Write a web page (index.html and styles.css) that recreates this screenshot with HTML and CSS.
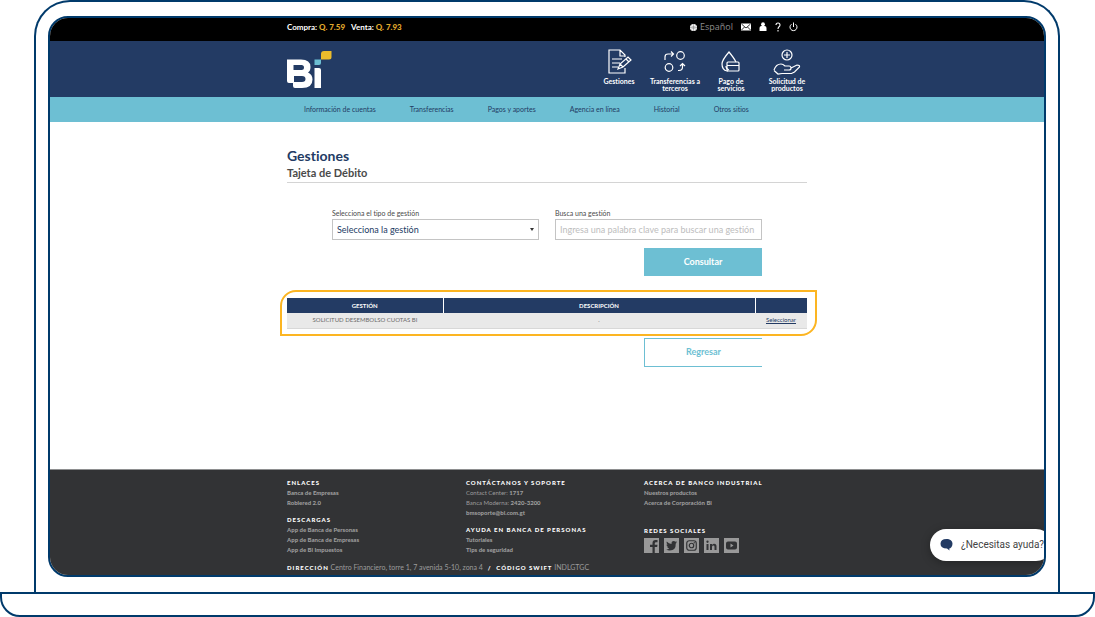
FILE: index.html
```html
<!DOCTYPE html>
<html lang="es">
<head>
<meta charset="utf-8">
<title>Gestiones - Banca en línea</title>
<link rel="stylesheet" href="styles.css">
</head>
<body>
<div class="laptop">
  <div class="lid">
    <div class="screen">
      <div class="topbar">
        <div class="container topbar-row">
          <p class="rates"><span>Compra: <b>Q. 7.59</b></span><span>Venta: <b>Q. 7.93</b></span></p>
          <div class="tools">
            <button class="tool lang" type="button">
              <svg width="7" height="7" viewBox="0 0 14 14"><circle cx="7" cy="7" r="7" fill="#fff"/><path d="M0 7h14M7 0v14M2 3.500c3 2 7 2 10 0M2 10.500c3-2 7-2 10 0" stroke="#777" fill="none"/></svg>
              Español</button>
            <button class="tool" type="button" aria-label="Mensajes"><svg width="10" height="8" viewBox="0 0 20 16"><path d="M0 1h20v14H0z" fill="#fff"/><path d="M1 2l9 8 9-8M1 14l6-6M19 14l-6-6" stroke="#000" stroke-width="1.600" fill="none"/></svg></button>
            <button class="tool" type="button" aria-label="Perfil"><svg width="8" height="10" viewBox="0 0 16 20"><circle cx="8" cy="4.500" r="3.800" fill="#fff"/><path d="M1 18v-6q0-4 4-4h6q4 0 4 4v6z" fill="#fff"/></svg></button>
            <button class="tool" type="button" aria-label="Ayuda"><svg width="6" height="10" viewBox="0 0 12 20"><path d="M2 6q0-4 4-4t4 4q0 2-2 3.500T6 14M6 16v3" stroke="#fff" stroke-width="2.200" fill="none"/></svg></button>
            <button class="tool" type="button" aria-label="Salir"><svg width="9" height="10" viewBox="0 0 18 20"><path d="M5 4.500a7 7 0 1 0 8 0M9 1v9" stroke="#fff" stroke-width="2" fill="none"/></svg></button>
          </div>
        </div>
      </div>

      <header class="header">
        <div class="container header-row">
          <a class="logo" href="#" aria-label="Bi">
            <svg width="45" height="37" viewBox="0 0 45 37">
              <path fill="#fff" fill-rule="evenodd" d="M0 8.500h14q9.500 0 9.500 7.500 0 4-2.500 5.500 4.500 2 4.500 7 0 8.500-10.500 8.500H8q-2 0-2-2v-3H2q-2 0-2-2zM6.500 14v5h8q2.500 0 2.500-2.500T14.500 14zM7 25v6h8q3.500 0 3.500-3T15 25z"/>
              <path fill="#fff" d="M27.500 17H32q2 0 2 2v18h-6.500z"/>
              <path fill="#6dbfd3" d="M27.500 8.500H34V12q0 2-2 2h-4.500z"/>
              <path fill="#ecbc2c" d="M37 0h7.500v6q0 2.500-2.500 2.500h-8V3q0-3 3-3z"/>
            </svg>
          </a>
          <nav class="shortcuts">
            <a href="#"><svg width="26" height="28" viewBox="0 0 26 28"><path d="M19 9V7l-5-5H3v23h16v-5M14 2v6h5M6 11h10M6 15h8M6 19h6M12 21l2-5 8-7 3 3-8 7zM20 11l3 3M14 16l3 3"/></svg><span>Gestiones</span></a>
            <a href="#"><svg width="26" height="28" viewBox="0 0 26 28"><circle cx="18.500" cy="7.500" r="3.800"/><circle cx="7" cy="19.500" r="3.800"/><path d="M3 12V9q0-3 3-3h5M9 3.500L11.500 6 9 8.500M16 22.500h1q3.500 0 3.500-3.500v-3M18 18l2.500-2.500L23 18"/></svg><span>Transferencias a terceros</span></a>
            <a href="#"><svg width="26" height="28" viewBox="0 0 26 28"><path d="M10 23H9q-5-1-5-7 0-4 7-12 5 6 7 10M8 18q0 3 3 4"/><path d="M10 14h10q1 0 1 1v7q0 1-1 1H10q-1 0-1-1v-7q0-1 1-1zM9 17.500h12"/></svg><span>Pago de servicios</span></a>
            <a href="#"><svg width="28" height="28" viewBox="0 0 28 28"><circle cx="14" cy="7" r="5"/><path d="M14 4v6M11 7h6M1 22q2-6 7-6 2 0 4 2h4q2 0 2 2t-2 2h-5M18 20l6-3q3 0 2.500 2l-5 5-3 1.500H9L5 26l-4-3.500"/></svg><span>Solicitud de productos</span></a>
          </nav>
        </div>
      </header>

      <nav class="menu">
        <div class="container menu-row">
          <a href="#">Información de cuentas</a>
          <a href="#">Transferencias</a>
          <a href="#">Pagos y aportes</a>
          <a href="#">Agencia en línea</a>
          <a href="#">Historial</a>
          <a href="#">Otros sitios</a>
        </div>
      </nav>

      <main class="main">
        <div class="container">
          <div class="title">
            <h1>Gestiones</h1>
            <h2>Tajeta de Débito</h2>
          </div>
          <form class="search">
            <div class="field">
              <label for="tipo">Selecciona el tipo de gestión</label>
              <div class="select-box">
                <select id="tipo"><option>Selecciona la gestión</option></select>
              </div>
            </div>
            <div class="field">
              <label for="busca">Busca una gestión</label>
              <input id="busca" type="text" placeholder="Ingresa una palabra clave para buscar una gestión">
            </div>
            <button class="btn btn-primary" type="submit">Consultar</button>
          </form>
          <div class="highlight">
            <table class="results">
              <colgroup><col class="col-name"><col class="col-desc"><col class="col-action"></colgroup>
              <thead><tr><th>GESTIÓN</th><th>DESCRIPCIÓN</th><th></th></tr></thead>
              <tbody><tr><td>SOLICITUD DESEMBOLSO CUOTAS BI</td><td>.</td><td><a href="#">Seleccionar</a></td></tr></tbody>
            </table>
          </div>
          <div class="actions"><button class="btn btn-outline" type="button">Regresar</button></div>
        </div>
      </main>

      <footer class="footer">
        <div class="container">
          <div class="footer-cols">
            <div class="footer-col">
              <section><h3>ENLACES</h3><a href="#">Banca de Empresas</a><a href="#">Roblered 2.0</a></section>
              <section><h3>DESCARGAS</h3><a href="#">App de Banca de Personas</a><a href="#">App de Banca de Empresas</a><a href="#">App de Bi Impuestos</a></section>
            </div>
            <div class="footer-col">
              <section><h3>CONTÁCTANOS Y SOPORTE</h3><p>Contact Center: <b>1717</b></p><p>Banca Moderna: <b>2420-3200</b></p><a href="#">bmsoporte@bi.com.gt</a></section>
              <section><h3>AYUDA EN BANCA DE PERSONAS</h3><a href="#">Tutoriales</a><a href="#">Tips de seguridad</a></section>
            </div>
            <div class="footer-col footer-col-wide-gap">
              <section><h3>ACERCA DE BANCO INDUSTRIAL</h3><a href="#">Nuestros productos</a><a href="#">Acerca de Corporación Bi</a></section>
              <section>
                <h3>REDES SOCIALES</h3>
                <div class="social">
                  <a href="#" aria-label="Facebook"><svg viewBox="0 0 30 30"><path d="M17 30V18h-5v-4.500h5V10q0-6 6-6h4v4.500h-3q-2.500 0-2.500 2.500v2.500H27l-.7 4.500h-4.800v12z"/></svg></a>
                  <a href="#" aria-label="Twitter"><svg viewBox="0 0 30 30"><path d="M26 9q-1 1-2.500 2 .5 14-12 14-4 0-7-2 4 0 6-2-3-.5-4-3h2q-3.500-1-3.500-5l2 .6Q4 10 5.500 7q4 4.500 9.500 5-.5-6 4.500-6 2 0 3 1.500l3-1q-.5 1.500-2 2.500z"/></svg></a>
                  <a href="#" aria-label="Instagram"><svg viewBox="0 0 30 30"><rect class="line" x="5.500" y="5.500" width="19" height="19" rx="5"/><circle class="line" cx="15" cy="15" r="4.500"/><circle cx="20.500" cy="9.500" r="1.300"/></svg></a>
                  <a href="#" aria-label="LinkedIn"><svg viewBox="0 0 30 30"><path d="M5 12h4v12H5zM12 12h4v2q1.500-2.500 4.500-2.500Q25 11.500 25 17v7h-4v-6.500q0-2.500-2.300-2.500T16 17.500V24h-4z"/><circle cx="7" cy="7.500" r="2.300"/></svg></a>
                  <a href="#" aria-label="YouTube"><svg viewBox="0 0 30 30"><path fill-rule="evenodd" d="M8 7h14q4 0 4 4v8q0 4-4 4H8q-4 0-4-4v-8q0-4 4-4zM13 11v8l6-4z"/></svg></a>
                </div>
              </section>
            </div>
          </div>
          <p class="address"><strong>DIRECCIÓN</strong> Centro Financiero, torre 1, 7 avenida 5-10, zona 4 <strong class="slash">/</strong> <strong>CÓDIGO SWIFT</strong> INDLGTGC</p>
        </div>
      </footer>

      <button class="chat" type="button">
        <svg width="13" height="12" viewBox="0 0 26 24"><path d="M13 0C20 0 25 4 25 9.500S21 19 18.500 19L19 23l-5-4Q1 19 1 9.500 1 0 13 0z" fill="#233b64"/></svg>
        ¿Necesitas ayuda?
      </button>
    </div>
  </div>
  <div class="base"></div>
</div>
</body>
</html>
```
FILE: styles.css
```css
:root {
  --frame: #003a6b;
  --navy: #233b64;
  --teal: #6dbfd3;
  --dark: #323335;
}

* { box-sizing: border-box; }

body {
  margin: 0;
  background: #fff;
  color: #4a4a4a;
  font: 7px/10px Lato, "Open Sans", sans-serif;
  font-variant-ligatures: none;
}

h1, h2, h3, p { margin: 0; }
a { color: inherit; text-decoration: none; }
button, input, select { font: inherit; font-variant-ligatures: none; }
button { cursor: pointer; }

/* Device frame */
.laptop {
  display: flex;
  flex-direction: column;
  min-height: 100vh;
}

.lid {
  flex: 1;
  display: flex;
  margin: 0 35px 0 34px;
  padding: 14px 12px 15px;
  border: 2px solid var(--frame);
  border-bottom: 0;
  border-radius: 36px 36px 0 0;
}

.base {
  height: 25px;
  border: 2px solid var(--frame);
  border-radius: 0 0 20px 20px;
}

.screen {
  position: relative;
  flex: 1;
  display: flex;
  flex-direction: column;
  overflow: hidden;
  border: 2px solid var(--frame);
  border-radius: 20px;
}

.container {
  width: 100%;
  max-width: 520px;
  margin: 0 auto;
}

/* Top bar */
.topbar { background: #000; color: #fff; }

.topbar-row {
  display: flex;
  justify-content: space-between;
  align-items: center;
  height: 23px;
  padding: 0 9px 5px 0;
}

.rates {
  display: flex;
  gap: 6px;
  font-size: 8px;
  font-weight: 700;
}
.rates b { color: #e0a92c; }

.tools {
  display: flex;
  align-items: center;
  gap: 8px;
}

.tool {
  display: flex;
  align-items: center;
  gap: 3px;
  padding: 0;
  border: 0;
  background: none;
}

.lang {
  color: #8d8d8d;
  font: 9px/12px "Open Sans", sans-serif;
}

/* Header */
.header { background: var(--navy); }

.header-row {
  display: flex;
  justify-content: space-between;
  height: 56px;
}

.logo { padding-top: 10px; }

.shortcuts {
  display: flex;
  margin-right: -8px;
  padding-top: 7px;
}

.shortcuts a {
  display: flex;
  flex-direction: column;
  align-items: center;
  width: 56px;
  padding: 0 2px;
  color: #fff;
  font-weight: 700;
  line-height: 7px;
  text-align: center;
}

.shortcuts span { padding-top: 2px; }

.shortcuts svg {
  fill: none;
  stroke: #fff;
  stroke-width: 1.2;
}

/* Menu */
.menu { background: var(--teal); color: var(--navy); }

.menu-row {
  display: flex;
  gap: 34px;
  padding: 7px 17px 8px;
  white-space: nowrap;
}

/* Content */
.main { flex: 1; padding-top: 25px; }

.title {
  padding-bottom: 1px;
  border-bottom: 1px solid #d4d4d4;
}

.title h1 {
  color: var(--navy);
  font-size: 14px;
  line-height: 18px;
}

.title h2 {
  font-size: 11px;
  line-height: 16px;
}

.search {
  display: grid;
  grid-template-columns: 1fr 1fr;
  gap: 8px 16px;
  padding: 25px 45px 14px;
}

.field label {
  display: block;
  font-size: 7px;
  line-height: 11px;
}

.field input,
.field select {
  display: block;
  width: 100%;
  height: 21px;
  padding: 0 4px;
  border: 1px solid #c4c4c4;
  border-radius: 0;
  background: #fff;
  color: var(--navy);
  font-size: 9px;
  appearance: none;
}

.field input::placeholder { color: #bdbdbd; }

.select-box { position: relative; }

.select-box::after {
  content: "";
  position: absolute;
  top: 9px;
  right: 5px;
  border: 2px solid transparent;
  border-top: 3px solid #333;
  border-bottom: 0;
}

.btn {
  width: 118px;
  height: 28px;
  padding: 0;
  border: 0;
  font-size: 9px;
  font-weight: 700;
}

.btn-primary {
  grid-column: 2;
  justify-self: end;
  background: var(--teal);
  color: #fff;
}

.btn-outline {
  height: 29px;
  border: 1px solid var(--teal);
  border-right: 0;
  background: #fff;
  color: var(--teal);
}

.highlight {
  margin: 0 -10px 0 -7px;
  padding: 6px 8px 5px 5px;
  border: 2px solid #fcb522;
  border-radius: 16px 0 16px 0;
}

.results {
  width: 100%;
  border-collapse: collapse;
  table-layout: fixed;
  font-size: 6px;
  line-height: 14px;
  text-align: center;
}

.col-name { width: 30%; }
.col-desc { width: 60%; }
.col-action { width: 10%; }

.results th {
  height: 15px;
  padding: 0;
  background: var(--navy);
  color: #fff;
}
.results th + th { border-left: 1px solid #fff; }

.results td {
  height: 15px;
  padding: 0;
  border-bottom: 1px solid #d8d8d8;
  background: #e9e9e9;
  color: #6a6a6a;
}

.results a {
  color: var(--navy);
  text-decoration: underline;
}

.actions {
  padding: 2px 45px 0;
  text-align: right;
}

/* Footer */
.footer {
  padding: 8px 0 2px;
  border-top: 1px solid #8e8f90;
  background: var(--dark);
  color: #9c9c9c;
}

.footer-cols {
  display: grid;
  grid-template-columns: 179fr 178fr 163fr;
  font-size: 6px;
}

.footer-col {
  display: flex;
  flex-direction: column;
  gap: 7px;
}

.footer-col-wide-gap { gap: 18px; }

.footer a,
.footer b {
  font-weight: 900;
}

.footer a { display: block; }

.footer h3, .address strong {
  color: #fff;
  font-size: 6px;
  font-weight: 900;
  letter-spacing: 1px;
}

.social { display: flex; gap: 5px; padding-top: 2px; }

.social svg {
  display: block;
  width: 15px;
  height: 15px;
  background: #999;
  fill: var(--dark);
}

.social .line { fill: none; stroke: var(--dark); stroke-width: 2.4; }

.address { padding-top: 7px; }
.address .slash { padding: 0 3px; }

/* Chat launcher */
.chat {
  position: absolute;
  right: -8px;
  bottom: 14px;
  display: flex;
  align-items: center;
  gap: 8px;
  width: 122px;
  height: 32px;
  padding: 0 0 0 10px;
  border: 0;
  border-radius: 16px;
  background: #fff;
  box-shadow: 0 2px 10px rgba(0, 0, 0, 0.3);
  color: #444;
  font: 10px/12px Roboto, sans-serif;
  white-space: nowrap;
}
```
